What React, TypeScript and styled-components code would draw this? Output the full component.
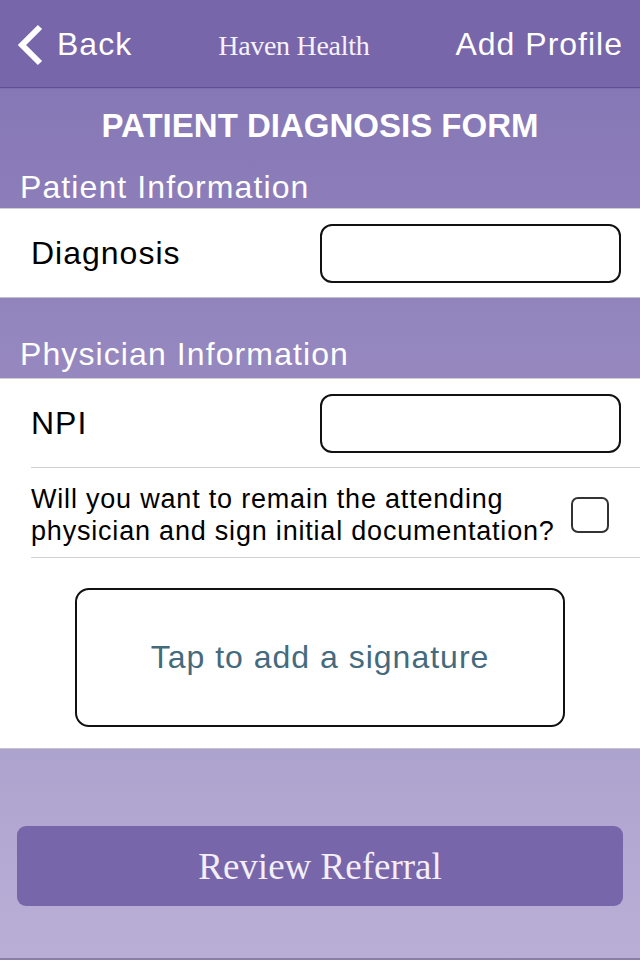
import React from 'react'
import styled, { createGlobalStyle } from 'styled-components'

const GlobalStyle = createGlobalStyle`
  html, body {
    margin: 0;
    padding: 0;
  }
  body {
    font-family: "Liberation Sans", Arial, Helvetica, sans-serif;
  }
`

const Page = styled.div`
  width: 640px;
  min-height: 960px;
  box-sizing: border-box;
  display: flex;
  flex-direction: column;
  background: linear-gradient(180deg, #7866ab 0px, #7866ab 88px, #8677b6 89px, #9486be 340px, #aea4cf 770px, #b9afd6 958px);
  border-bottom: 2px solid #8a80a6;
`

const NavBar = styled.header`
  height: 88px;
  box-sizing: border-box;
  display: flex;
  align-items: center;
  justify-content: space-between;
  padding: 2px 17px 0 16px;
  background: #7866ab;
  border-bottom: 1px solid #5f5190;
  color: #fff;
`

const NavButton = styled.button`
  display: flex;
  align-items: center;
  gap: 13px;
  padding: 0;
  border: 0;
  background: none;
  color: #fff;
  font-family: "Liberation Sans", Arial, sans-serif;
  font-size: 32px;
  letter-spacing: 1px;
  cursor: pointer;
`

const Brand = styled.div`
  font-family: "Liberation Serif", "Times New Roman", serif;
  font-size: 28px;
  letter-spacing: -0.3px;
  color: #f6f2fb;
  padding-top: 2px;
`

const FormTitle = styled.h1`
  margin: 0;
  padding: 19px 0 0;
  line-height: 38px;
  text-align: center;
  font-size: 33px;
  font-weight: 700;
  color: #fff;
`

const SectionHeader = styled.h2<{ $top: number; $bottom: number }>`
  margin: 0;
  padding: ${({ $top, $bottom }) => `${$top}px 20px ${$bottom}px`};
  line-height: 40px;
  font-size: 32px;
  font-weight: 400;
  letter-spacing: 1.1px;
  color: #fff;
`

const Section = styled.section`
  background: #fff;
  border-top: 1px solid #cfcfd4;
  border-bottom: 1px solid #c4c0cc;
`

const FieldRow = styled.div<{ $divided?: boolean }>`
  height: 88px;
  margin-left: 31px;
  padding-right: 19px;
  display: flex;
  align-items: center;
  justify-content: space-between;
  border-bottom: ${({ $divided }) => ($divided ? '1px solid #d2d2d2' : '0')};
`

const Label = styled.label`
  font-size: 32px;
  letter-spacing: 1px;
  color: #000;
`

const TextInput = styled.input`
  width: 301px;
  height: 59px;
  box-sizing: border-box;
  border: 2px solid #111;
  border-radius: 12px;
  background: #fff;
  outline: none;
`

const CheckRow = styled.div`
  height: 90px;
  box-sizing: border-box;
  margin-left: 31px;
  padding: 4px 31px 0 0;
  display: flex;
  align-items: center;
  gap: 8px;
  border-bottom: 1px solid #d2d2d2;
`

const Question = styled.p`
  flex: 1;
  margin: 0;
  font-size: 27px;
  line-height: 32px;
  letter-spacing: 0.8px;
  color: #000;
`

const CheckBox = styled.span`
  width: 38px;
  height: 36px;
  flex-shrink: 0;
  box-sizing: border-box;
  border: 2.5px solid #333;
  border-radius: 7px;
  background: #fff;
`

const SignatureArea = styled.div`
  padding: 30px 0 21px;
  display: flex;
  justify-content: center;
`

const SignatureBox = styled.button`
  width: 490px;
  height: 139px;
  border: 2px solid #111;
  border-radius: 14px;
  background: #fff;
  font-family: "Liberation Sans", Arial, sans-serif;
  font-size: 32px;
  letter-spacing: 1px;
  color: #446a7e;
  cursor: pointer;
`

const Footer = styled.div`
  flex: 1;
  padding: 77px 17px 0;
`

const PrimaryButton = styled.button`
  width: 100%;
  height: 80px;
  border: 0;
  border-radius: 9px;
  background: #7866ab;
  color: #f4eef8;
  font-family: "Liberation Serif", "Times New Roman", serif;
  font-size: 37px;
  cursor: pointer;
`

const BackChevron = () => (
  <svg width="28" height="42" viewBox="0 0 28 42" aria-hidden="true">
    <polyline points="24,3 6,21 24,39" fill="none" stroke="#fff" strokeWidth="6" strokeLinejoin="miter" />
  </svg>
)

export default function App() {
  return (
    <Page>
      <GlobalStyle />
      <NavBar>
        <NavButton>
          <BackChevron />
          Back
        </NavButton>
        <Brand>Haven Health</Brand>
        <NavButton>Add Profile</NavButton>
      </NavBar>

      <FormTitle>PATIENT DIAGNOSIS FORM</FormTitle>
      <SectionHeader $top={22} $bottom={1}>Patient Information</SectionHeader>
      <Section>
        <FieldRow>
          <Label>Diagnosis</Label>
          <TextInput />
        </FieldRow>
      </Section>

      <SectionHeader $top={36} $bottom={4}>Physician Information</SectionHeader>
      <Section>
        <FieldRow $divided>
          <Label>NPI</Label>
          <TextInput />
        </FieldRow>
        <CheckRow>
          <Question>
            Will you want to remain the attending physician and sign initial documentation?
          </Question>
          <CheckBox />
        </CheckRow>
        <SignatureArea>
          <SignatureBox>Tap to add a signature</SignatureBox>
        </SignatureArea>
      </Section>

      <Footer>
        <PrimaryButton>Review Referral</PrimaryButton>
      </Footer>
    </Page>
  )
}
